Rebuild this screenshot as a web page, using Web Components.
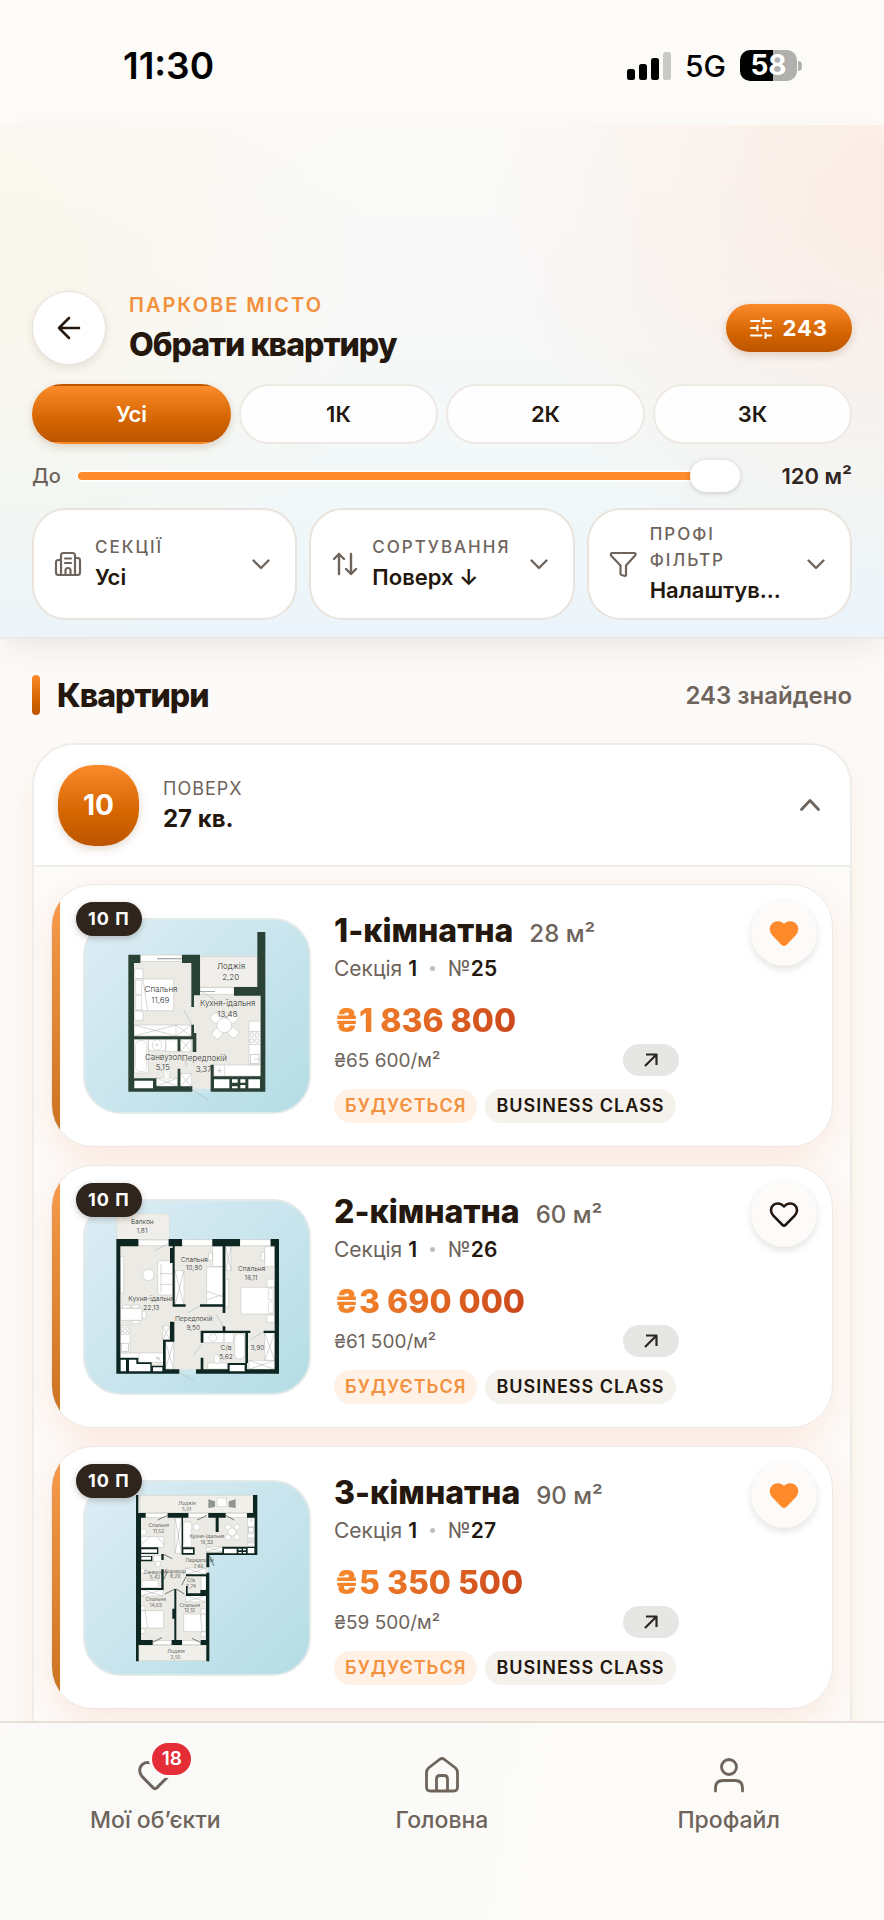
<!DOCTYPE html>
<html lang="uk">
<head>
<meta charset="utf-8">
<meta name="viewport" content="width=device-width, initial-scale=1">
<title>Обрати квартиру</title>
<style>
    :root {
        --ink: #23170e;
        --muted: #6e645c;
        --orange: #fd8b2b;
        --line: #eae3dc;
        --paper: #fcfaf8;
        --grad: linear-gradient(180deg, #fb8a2b 0%, #d46500 60%, #bd5500 100%);
    }
    body {
        margin: 0;
        background: var(--paper);
        color: var(--ink);
        font-family: Inter, "Liberation Sans", sans-serif;
    }
    .plan {
        display: block;
        width: 100%;
        height: 100%;
        font: 300 24px Inter, "Liberation Sans", sans-serif;
    }
    .plan.mid { font-size: 20px; }
    .plan.small { font-size: 15px; }
    .plan text { text-anchor: middle; fill: #2c332f; }
    .plan .floor { fill: #eceae5; }
    .plan .wall { fill: #2a4136; }
    .plan.dark .wall { fill: #0e2621; }
    .plan .item { fill: #fff; stroke: #bdbdbb; stroke-width: 1.5; }
    .plan .thin { fill: none; stroke: #a9acab; stroke-width: 1.5; }
    .plan .door { fill: none; stroke: #33413b; stroke-width: 2; }
</style>
</head>
<body>

<app-shell>
    <status-bar slot="top" time="11:30" network="5G" battery="58"></status-bar>

    <filter-header slot="top" eyebrow="Паркове місто" heading="Обрати квартиру" count="243">
        <room-tabs options="Усі,1К,2К,3К"></room-tabs>
        <area-slider max="120"></area-slider>
        <filter-row>
            <filter-select label="Секції" value="Усі" icon="building"></filter-select>
            <filter-select label="Сортування" value="Поверх ↓" icon="sort"></filter-select>
            <filter-select label="Профі фільтр" value="Налаштув..." icon="funnel"></filter-select>
        </filter-row>
    </filter-header>

    <section-title heading="Квартири">243 знайдено</section-title>

    <floor-group floor="10" count="27 кв.">
        <flat-card rooms="1-кімнатна" area="28 м²" section="1" number="25" price="1 836 800" rate="65 600" floor="10 П" liked>
            <svg slot="plan" class="plan" viewBox="134 151 672 576">
                <path class="floor" d="M270 262H470V262H660V660H270Z"/>
                <path fill="#f1efeb" stroke="#dccfc4" stroke-width="2" d="M479 261H651V352H479Z"/>
                <path fill="#cde7ec" d="M456 657H511V670H456Z"/>
                <path class="item" d="M300 256H425V275H300ZM479 354H581V374H479ZM283 298H308V326H283ZM283 424H308V452H283ZM283 328H400V423H283ZM286 332H304V374H286ZM286 378H304V420H286ZM282 466H453V499H282ZM407 466V499M420 508H453V546H420ZM420 612H454V652H420ZM324 510H376V543H324ZM376 510H411V545H376ZM282 510H324V610H282ZM348 625H411V650H348ZM626 455H661V585H626ZM521 586H661V619H521ZM553 586V619"/>
                <rect class="item" x="285" y="512" width="34" height="94" rx="16"/>
                <ellipse class="item" cx="350" cy="526" rx="14" ry="16"/>
                <circle class="thin" cx="350" cy="526" r="3"/>
                <path class="item" d="M370 585H388V630H370Z" opacity=".6"/>
                <path class="thin" d="M282 466L407 499M282 499L407 466M407 466L453 499M407 499L453 466M420 508L453 546M420 546L453 508M420 612L454 652M420 652L454 612M348 625L411 650M348 650L411 625M308 328L322 423M430 420L455 465M479 363L524 390M456 660L504 692M428 560L440 590M626 524H661M626 486H661M530 603H546M538 595V611"/>
                <path fill="#8b9390" d="M350 266H425V269H350ZM479 364H524V366H479Z"/>
                <g class="thin"><circle cx="634" cy="496" r="6"/><circle cx="650" cy="496" r="6"/><circle cx="634" cy="513" r="6"/><circle cx="650" cy="513" r="6"/><rect x="630" y="554" width="26" height="28"/><path d="M641 568H660"/></g>
                <g class="item"><rect x="513" y="432" width="26" height="26" rx="4" transform="rotate(-50 526 445)"/><rect x="565" y="432" width="26" height="26" rx="4" transform="rotate(50 578 445)"/><rect x="518" y="479" width="26" height="26" rx="4" transform="rotate(40 531 492)"/><rect x="566" y="476" width="26" height="26" rx="4" transform="rotate(-50 579 489)"/><circle cx="552" cy="467" r="22"/></g>
                <path class="wall" d="M264 255H300V280H281V500H453V465H461V490H468V547H457V509H420V545H412V509H281V626H348V650H412V597H420V650H456V666H264ZM425 255H479V377H461V412H453V280H425ZM651 187H675V666H511V585H520V620H661V378H581V352H651Z"/>
                <path fill="#fff" d="M282 633H338V656H282ZM521 629H567V656H521ZM575 629H592V639H575ZM575 650H592V656H575ZM600 629H615V639H600ZM600 646H615V656H600ZM624 629H659V656H624Z"/>
                <text x="572" y="299">Лоджія</text><text x="571" y="332">2,20</text>
                <text x="362" y="368">Спальня</text><text x="360" y="401">11,69</text>
                <text x="562" y="410">Кухня-їдальня</text><text x="561" y="442">13,48</text>
                <text x="369" y="570">Санвузол</text><text x="367" y="602">5,15</text>
                <text x="492" y="575">Передпокій</text><text x="490" y="607">3,37</text>
            </svg>
        </flat-card>

        <flat-card rooms="2-кімнатна" area="60 м²" section="1" number="26" price="3 690 000" rate="61 500" floor="10 П">
            <svg slot="plan" class="plan mid dark" viewBox="134 124 672 576">
                <path class="floor" d="M236 250H708V635H236Z"/>
                <path fill="#efeeea" stroke="#d8dcd8" stroke-width="2" d="M229 162H387V240H229Z"/>
                <path fill="#cde7ec" d="M417 629H467V645H417Z"/>
                <path class="item" d="M294 241H385V258H294ZM425 240H516V258H425ZM599 240H691V258H599ZM240 290H250V400H240ZM517 260H548V320H517ZM505 280H517V302H505ZM499 322H548V435H499ZM404 333H431V436H404ZM556 261H572V332H556ZM673 261H703V320H673ZM662 278H673V302H662ZM680 358H703V382H680ZM602 383H702V463H602ZM680 466H703V488H680ZM556 360H565V442H556ZM240 446H305V482H240ZM247 436H269V446H247ZM275 436H296V446H275ZM275 482H297V492H275ZM305 454H317V476H305ZM240 498H269V580H240ZM240 580H371V608H240ZM296 580V608M367 499H388V540H367ZM375 546H400V628H375ZM489 520H551V549H489ZM551 520H579V549H551ZM502 610H560V628H502ZM673 520H703V602H673ZM626 602H703V629H626Z"/>
                <path class="item" d="M362 303H396V406H362C352 406 352 398 352 390V318C352 308 356 303 362 303Z"/>
                <path class="thin" d="M362 312V398M360 342H396M360 374H396M499 394L548 412M500 420L548 404M404 333L431 436M404 436L431 333M556 261L572 332M556 332L572 261M375 546L400 628M375 628L400 546M367 499L388 540M367 540L388 499M673 520L703 602M673 602L703 520M626 602L703 629M626 629L703 602M345 272L383 252M442 460L478 438M528 465L549 500M634 538L670 516M460 588L482 555M420 640L460 665M347 596H359M353 590V602M346 590L360 602"/>
                <rect class="item" x="583" y="522" width="30" height="76" rx="14"/>
                <rect class="item" x="684" y="386" width="15" height="34" rx="5"/><rect class="item" x="684" y="426" width="15" height="34" rx="5"/>
                <circle class="item" cx="324" cy="346" r="17"/>
                <ellipse class="item" cx="518" cy="534" rx="12" ry="11"/><ellipse class="item" cx="530" cy="598" rx="9" ry="13"/>
                <g class="thin"><circle cx="247" cy="507" r="5"/><circle cx="261" cy="507" r="5"/><circle cx="247" cy="520" r="5"/><circle cx="261" cy="520" r="5"/><rect x="243" y="552" width="22" height="24"/></g>
                <path class="wall" d="M228 238H294V260H240V594H294V608H334V618H368V540H389V486H402V546H376V629H417V642H228ZM385 238H425V260H403V434H436V441H397V310H389V265H397V260H385ZM516 238H599V260H555V460H547V441H479V434H547V260H516ZM691 238H716V642H467V629H481V594H489V629H562V610H620V629H703V520H670V513H703V260H691ZM547 500H555V513H630V520H623V610H615V520H489V549H481V513H547Z"/>
                <path fill="#fff" d="M241 600H257V635H241ZM266 600H288V613H330V635H266ZM338 623H366V635H338ZM568 616H613V635H568Z"/>
                <text x="306" y="194">Балкон</text><text x="305" y="220">1,81</text>
                <text x="462" y="306">Спальня</text><text x="461" y="332">10,90</text>
                <text x="634" y="334">Спальня</text><text x="632" y="360">16,11</text>
                <text x="333" y="425">Кухня-їдальня</text><text x="333" y="452">22,13</text>
                <text x="460" y="483">Передпокій</text><text x="459" y="510">9,50</text>
                <text x="557" y="570">С/в</text><text x="557" y="597">5,62</text><text x="651" y="570">3,90</text>
            </svg>
        </flat-card>

        <flat-card rooms="3-кімнатна" area="90 м²" section="1" number="27" price="5 350 500" rate="59 500" floor="10 П" liked>
            <svg slot="plan" class="plan small dark" viewBox="134 128 672 576">
                <path class="floor" d="M292 170H648V345H503V664H292Z"/>
                <path fill="#f1efea" stroke="#cfd3cf" stroke-width="2" d="M299 168H638V220H299ZM295 618H498V664H295Z"/>
                <path class="item" d="M316 222H382V234H316ZM444 222H504V234H444ZM556 222H620V234H556ZM530 176H558V202H530ZM303 292H370V324H303ZM404 236H424V342H404ZM430 248H454V322H430ZM622 236H642V320H622ZM498 322H546V338H498ZM436 386H497V406H436ZM302 450H368V470H302ZM436 468H497V488H436ZM302 514H370V566H302ZM302 500H314V514H302ZM302 568H314V582H302ZM430 524H496V577H430ZM482 508H496V524H482ZM482 577H496V592H482ZM340 348H366V366H340ZM482 412H497V452H482ZM337 604H394V616H337ZM425 604H481V616H425Z"/>
                <path class="item" d="M305 424H352Q358 434 352 444H305ZM345 366H360V380Q352 388 345 380Z"/>
                <path class="thin" d="M404 236L424 342M404 342L424 236M436 386L497 406M436 406L497 386M302 450L368 470M302 470L368 450M436 468L497 488M436 488L497 468M498 322L546 338M498 338L546 322M314 514L322 566M480 524L486 577M622 262H642M622 282H642M303 315L330 292M370 315L350 292"/>
                <circle class="item" cx="310" cy="278" r="9"/><circle class="item" cx="469" cy="263" r="10"/><circle class="item" cx="309" cy="395" r="8"/>
                <g class="item"><rect x="556" y="256" width="15" height="15" rx="3" transform="rotate(40 563 263)"/><rect x="582" y="256" width="15" height="15" rx="3" transform="rotate(-40 589 263)"/><rect x="556" y="286" width="15" height="15" rx="3" transform="rotate(40 563 293)"/><rect x="582" y="286" width="15" height="15" rx="3" transform="rotate(-40 589 293)"/><circle cx="575" cy="278" r="12"/></g>
                <path fill="#8f9692" d="M504 180L524 186V203L504 206ZM565 186L586 180V206L565 203Z"/>
                <g class="thin"><circle cx="628" cy="298" r="4"/><circle cx="637" cy="298" r="4"/><circle cx="628" cy="308" r="4"/><circle cx="637" cy="308" r="4"/><circle cx="633" cy="244" r="3"/><rect x="625" y="264" width="14" height="14"/></g>
                <path class="door" d="M352 242L381 228M470 242L500 228M556 228L582 242M370 345L396 358M508 350L521 380M370 420L382 396M374 464L404 449M408 449L432 464M424 438L437 412M338 608L365 595M455 597L481 610"/>
                <path class="wall" d="M287 167H294V221H316V235H302V324H354V344H302V350H336V366H302V446H363V390H370V452H302V602H337V617H295V666H287ZM382 221H444V235H428V324H463V346H424V235H382ZM504 221H556V235H535V278H526V235H504ZM638 167H651V347H507V384H498V340H546V322H643V235H620V221H638ZM363 344H370V362H363ZM498 400H507V666H498V617H481V602H497V470H437V440H442V462H480V452H497V411H437V405H498ZM402 449H408V602H425V617H394V602H402V538H396V508H402Z"/>
                <path fill="#fff" d="M303 330H350V340H303ZM303 352H332V361H303ZM429 330H458V341H429ZM551 328H589V342H551ZM622 326H642V342H622ZM594 328H604V333H594ZM608 328H617V333H608ZM594 338H604V342H594ZM608 338H617V342H608Z"/>
                <text x="440" y="197">Лоджія</text><text x="439" y="215">5,01</text>
                <text x="355" y="264">Спальня</text><text x="355" y="282">11,52</text>
                <text x="500" y="297">Кухня-їдальня</text><text x="499" y="314">16,33</text>
                <text x="478" y="368">Передпокій</text><text x="474" y="386">7,46</text>
                <text x="344" y="403">Санвузол</text><text x="344" y="420">5,42</text>
                <text x="405" y="400">Коридор</text><text x="405" y="417">8,26</text>
                <text x="452" y="427">С/в</text><text x="452" y="445">2,74</text>
                <text x="346" y="486">Спальня</text><text x="346" y="504">14,63</text>
                <text x="448" y="502">Спальня</text><text x="448" y="519">12,12</text>
                <text x="407" y="641">Лоджія</text><text x="406" y="659">2,55</text>
            </svg>
        </flat-card>
    </floor-group>

    <tab-bar slot="bottom">
        <tab-link icon="heart" badge="18">Мої об’єкти</tab-link>
        <tab-link icon="home">Головна</tab-link>
        <tab-link icon="user">Профайл</tab-link>
    </tab-bar>
</app-shell>

<script>
const ICONS = {
    back: `<svg width="26" height="26" viewBox="0 0 26 26" fill="none" stroke="currentColor" stroke-width="2.6" stroke-linecap="round" stroke-linejoin="round"><path d="M23 13H3M13 3L3 13L13 23"/></svg>`,
    sliders: `<svg width="22" height="22" viewBox="0 0 22 22" fill="none" stroke="currentColor" stroke-width="2" stroke-linecap="round"><path d="M1 4H9.5M13.5 4H21M13.5 1.5V6.5M1 11H7.5M7.5 8.5V13.5M11.5 11H21M1 18.5H11.5M15.5 18.5H21M15.5 16V21"/></svg>`,
    building: `<svg width="28" height="28" viewBox="0 0 28 28" fill="none" stroke="currentColor" stroke-width="2.2" stroke-linecap="round" stroke-linejoin="round"><path d="M7 25V5.5Q7 3 9.5 3H18.5Q21 3 21 5.5V25M7 10H4.5Q2 10 2 12.5V22.5Q2 25 4.5 25H23.5Q26 25 26 22.5V10.5Q26 8 23.5 8H21M11 8.5H17M11 13H17M11.5 25V20.5Q11.5 18 14 18Q16.5 18 16.5 20.5V25"/></svg>`,
    sort: `<svg width="28" height="28" viewBox="0 0 28 28" fill="none" stroke="currentColor" stroke-width="2.4" stroke-linecap="round" stroke-linejoin="round"><path d="M8 24V4M3 9L8 4L13 9M20 4V24M15 19L20 24L25 19"/></svg>`,
    funnel: `<svg width="28" height="28" viewBox="0 0 28 28" fill="none" stroke="currentColor" stroke-width="2.2" stroke-linejoin="round"><path d="M3 3H25Q27 3 26.5 5L17 15.5V25Q17 26 16 26L12.5 25Q11.5 24.5 11.5 23.5V15.5L2 5.5Q1.5 3.5 3 3Z"/></svg>`,
    down: `<svg width="20" height="20" viewBox="0 0 20 20" fill="none" stroke="currentColor" stroke-width="2.4" stroke-linecap="round" stroke-linejoin="round"><path d="M2.5 6.5L10 14L17.5 6.5"/></svg>`,
    up: `<svg width="20" height="20" viewBox="0 0 20 20" fill="none" stroke="currentColor" stroke-width="2.8" stroke-linecap="round" stroke-linejoin="round"><path d="M1.5 14.5L10 5.5L18.5 14.5"/></svg>`,
    open: `<svg width="16" height="16" viewBox="0 0 16 16" fill="none" stroke="currentColor" stroke-width="2.2" stroke-linejoin="round"><path d="M3 2.5H13.5V13M13.5 2.5L2 14"/></svg>`,
    like: `<svg width="34" height="34" viewBox="0 0 24 24" stroke="currentColor" stroke-width="1.8" stroke-linecap="round" stroke-linejoin="round"><path d="M12 20.2C11.5 20.2 11.2 20 10.8 19.6L4.3 13C2.2 10.8 2.4 7.4 4.5 5.6C6.6 3.9 9.8 4.2 12 6.7C14.2 4.2 17.4 3.9 19.5 5.6C21.6 7.4 21.8 10.8 19.7 13L13.2 19.6C12.8 20 12.5 20.2 12 20.2Z"/></svg>`,
    home: `<svg width="40" height="40" viewBox="0 0 40 40" fill="none" stroke="currentColor" stroke-width="2.8" stroke-linejoin="round"><path d="M4.5 17.5Q4.5 15 6.5 13L17.5 4.5Q20 2.5 22.5 4.5L33.5 13Q35.5 15 35.5 17.5V32Q35.5 36 31.5 36H8.5Q4.5 36 4.5 32ZM14.5 36V24Q14.5 20.5 18 20.5H22Q25.5 20.5 25.5 24V36"/></svg>`,
    user: `<svg width="40" height="40" viewBox="0 0 40 40" fill="none" stroke="currentColor" stroke-width="2.8" stroke-linecap="round"><circle cx="20" cy="12" r="7.5"/><path d="M6.5 36V33Q6.5 25.5 14 25.5H26Q33.5 25.5 33.5 33V36"/></svg>`
};
ICONS.heart = ICONS.like.replace(`width="34" height="34"`, `width="40" height="40" fill="none"`);

const RESET = `
    * { box-sizing: border-box; margin: 0; }
    button, select, input { font: inherit; color: inherit; border: 0; padding: 0; background: none; }
    svg { display: block; flex: none; }
`;

class BaseElement extends HTMLElement {
    connectedCallback(){
        if (this.shadowRoot) return;
        this.attachShadow({mode: "open"}).innerHTML = `<style>${RESET}</style>${this.render()}`;
    }

    attr(name){
        return this.getAttribute(name) || "";
    }
}

customElements.define("app-shell", class extends BaseElement {
    render(){
        return `
            <style>
            :host {
                display: flex;
                flex-direction: column;
                height: 100vh;
            }
            header {
                position: relative;
                z-index: 1;
            }
            main {
                flex: 1;
                min-height: 0;
                overflow-y: auto;
                scrollbar-width: none;
                padding: 36px 32px 0;
            }
            </style>
            <header><slot name="top"></slot></header>
            <main><slot></slot></main>
            <slot name="bottom"></slot>`;
    }
});

customElements.define("status-bar", class extends BaseElement {
    render(){
        return `
            <style>
            :host {
                display: flex;
                align-items: center;
                justify-content: space-between;
                height: 125px;
                padding: 6px 82px 0 123px;
                box-sizing: border-box;
                background: #fcfbf8;
                color: #000;
            }
            .time {
                font-size: 37px;
                font-weight: 600;
            }
            .right {
                display: flex;
                align-items: center;
                gap: 14px;
                font-size: 30px;
                font-weight: 500;
            }
            .battery {
                display: flex;
                align-items: center;
                gap: 1px;
            }
            .cell {
                width: 57px;
                height: 31px;
                border-radius: 10px;
                background: linear-gradient(90deg, #000 58%, #b0b0ae 58%);
                color: #fff;
                font-size: 28px;
                font-weight: 700;
                line-height: 31px;
                text-align: center;
            }
            .nub {
                width: 4px;
                height: 10px;
                border-radius: 0 4px 4px 0;
                background: #b0b0ae;
            }
            </style>
            <span class="time">${this.attr("time")}</span>
            <div class="right">
                <svg width="44" height="28" viewBox="0 0 44 28">
                    <rect y="17" width="8" height="11" rx="2.5"/>
                    <rect x="12" y="12" width="8" height="16" rx="2.5"/>
                    <rect x="24" y="6" width="8" height="22" rx="2.5"/>
                    <rect x="36" width="8" height="28" rx="2.5" fill="#c9c9c7"/>
                </svg>
                <span>${this.attr("network")}</span>
                <div class="battery"><div class="cell">${this.attr("battery")}</div><div class="nub"></div></div>
            </div>`;
    }
});

customElements.define("filter-header", class extends BaseElement {
    render(){
        return `
            <style>
            :host {
                display: flex;
                flex-direction: column;
                gap: 16px;
                padding: 166px 32px 17px;
                border-bottom: 2px solid #ebeae6;
                background:
                    radial-gradient(circle at 100% 14%, rgba(251, 229, 217, .65), rgba(251, 229, 217, 0) 40%),
                    radial-gradient(circle at 0% 30%, rgba(250, 245, 230, .7), rgba(250, 245, 230, 0) 40%),
                    linear-gradient(180deg, #fbfaf8 0%, #f8f8f8 35%, #f1f8f8 72%, #ebf4fb 100%);
                box-shadow: 0 12px 28px -6px rgba(90, 90, 90, .12);
            }
            .bar {
                display: flex;
                align-items: center;
                margin-bottom: 3px;
            }
            .back {
                display: grid;
                place-items: center;
                width: 74px;
                height: 74px;
                border: 1px solid var(--line);
                border-radius: 50%;
                background: #fff;
                box-shadow: 0 3px 8px rgba(60, 40, 20, .1);
            }
            .titles {
                flex: 1;
                margin-left: 23px;
            }
            .eyebrow {
                margin-bottom: 6px;
                color: #f3903c;
                font-size: 20px;
                font-weight: 600;
                line-height: 28px;
                letter-spacing: 2px;
                text-transform: uppercase;
            }
            h1 {
                font-size: 32px;
                font-weight: 800;
                line-height: 40px;
                letter-spacing: -1px;
            }
            .count {
                display: flex;
                align-items: center;
                gap: 10px;
                height: 48px;
                padding: 0 24px;
                border-radius: 24px;
                background: var(--grad);
                box-shadow: 0 3px 8px rgba(120, 60, 10, .2);
                color: #fff;
                font-size: 22px;
                font-weight: 700;
                letter-spacing: 1px;
            }
            </style>
            <div class="bar">
                <button class="back" aria-label="Назад">${ICONS.back}</button>
                <div class="titles">
                    <p class="eyebrow">${this.attr("eyebrow")}</p>
                    <h1>${this.attr("heading")}</h1>
                </div>
                <button class="count">${ICONS.sliders}${this.attr("count")}</button>
            </div>
            <slot></slot>`;
    }
});

customElements.define("room-tabs", class extends BaseElement {
    render(){
        const tabs = this.attr("options").split(",")
            .map((name, i) => `<button aria-pressed="${i === 0}">${name}</button>`).join("");
        return `
            <style>
            :host {
                display: grid;
                grid-template-columns: repeat(4, 1fr);
                gap: 8px;
            }
            button {
                height: 60px;
                border: 2px solid #efe9e4;
                border-radius: 30px;
                background: #fefefe;
                font-size: 22px;
                font-weight: 600;
            }
            button[aria-pressed="true"] {
                border-color: transparent;
                background: var(--grad);
                box-shadow: 0 3px 8px rgba(120, 60, 10, .2);
                color: #fff;
            }
            </style>
            ${tabs}`;
    }
});

customElements.define("area-slider", class extends BaseElement {
    render(){
        const max = this.attr("max");
        return `
            <style>
            :host {
                display: flex;
                align-items: center;
                gap: 17px;
                height: 32px;
                font-size: 22px;
            }
            label {
                color: var(--muted);
                font-size: 20px;
                font-weight: 500;
            }
            input {
                flex: 1;
                min-width: 0;
                height: 32px;
                appearance: none;
            }
            input::-webkit-slider-runnable-track {
                height: 8px;
                border-radius: 4px;
                background: var(--orange);
                box-shadow: 0 0 0 2px rgba(255, 255, 255, .8);
            }
            input::-webkit-slider-thumb {
                appearance: none;
                width: 50px;
                height: 32px;
                margin-top: -12px;
                border-radius: 16px;
                background: #fff;
                box-shadow: 0 1px 5px rgba(60, 50, 40, .25);
            }
            output {
                min-width: 95px;
                color: #30261f;
                font-weight: 600;
                text-align: right;
            }
            </style>
            <label for="area">До</label>
            <input id="area" type="range" min="0" max="${max}" value="${max}">
            <output for="area">${max} м²</output>`;
    }
});

customElements.define("filter-row", class extends BaseElement {
    render(){
        return `
            <style>
            :host {
                display: grid;
                grid-template-columns: repeat(3, minmax(0, 1fr));
                gap: 12px;
            }
            </style>
            <slot></slot>`;
    }
});

customElements.define("filter-select", class extends BaseElement {
    render(){
        return `
            <style>
            :host {
                display: flex;
                align-items: center;
                box-sizing: border-box;
                height: 112px;
                padding: 0 24px 0 20px;
                border: 2px solid var(--line);
                border-radius: 34px;
                background: #fff;
                color: var(--muted);
            }
            div {
                flex: 1;
                min-width: 0;
                margin: 0 12px 0 13px;
            }
            label {
                display: block;
                font-size: 17px;
                font-weight: 500;
                line-height: 26px;
                letter-spacing: 2px;
                text-transform: uppercase;
            }
            select {
                display: block;
                width: 100%;
                height: 34px;
                appearance: none;
                color: var(--ink);
                font-size: 22px;
                font-weight: 600;
            }
            </style>
            ${ICONS[this.attr("icon")]}
            <div>
                <label for="value">${this.attr("label")}</label>
                <select id="value"><option>${this.attr("value")}</option></select>
            </div>
            ${ICONS.down}`;
    }
});

customElements.define("section-title", class extends BaseElement {
    render(){
        return `
            <style>
            :host {
                display: flex;
                align-items: center;
                gap: 17px;
                margin-bottom: 28px;
                color: var(--muted);
                font-size: 24px;
                font-weight: 600;
            }
            i {
                width: 8px;
                height: 40px;
                border-radius: 4px;
                background: var(--grad);
            }
            h2 {
                flex: 1;
                color: var(--ink);
                font-size: 32px;
                font-weight: 800;
                letter-spacing: -1px;
            }
            </style>
            <i></i><h2>${this.attr("heading")}</h2><slot></slot>`;
    }
});

customElements.define("floor-group", class extends BaseElement {
    render(){
        return `
            <style>
            :host {
                display: block;
                overflow: hidden;
                border: 2px solid #f0ede9;
                border-radius: 42px;
                background: #fdfbfa;
                box-shadow: 0 16px 32px rgba(240, 140, 70, .1);
            }
            .head {
                display: flex;
                align-items: center;
                width: 100%;
                height: 122px;
                padding: 0 30px 0 24px;
                border-bottom: 2px solid #efedea;
                background: #fff;
                text-align: left;
            }
            .floor {
                display: grid;
                place-items: center;
                width: 81px;
                height: 81px;
                margin-right: 24px;
                border-radius: 36px;
                background: var(--grad);
                box-shadow: 0 3px 8px rgba(120, 60, 10, .2);
                color: #fff;
                font-size: 28px;
                font-weight: 700;
            }
            .text {
                display: flex;
                flex: 1;
                flex-direction: column;
            }
            .label {
                color: var(--muted);
                font-size: 18px;
                line-height: 28px;
                letter-spacing: 1px;
            }
            .count {
                font-size: 24px;
                font-weight: 700;
                line-height: 32px;
            }
            .up { color: var(--muted); }
            .list {
                display: grid;
                gap: 18px;
                padding: 17px 17px 72px;
            }
            </style>
            <button class="head" aria-expanded="true">
                <span class="floor">${this.attr("floor")}</span>
                <span class="text">
                    <span class="label">ПОВЕРХ</span>
                    <span class="count">${this.attr("count")}</span>
                </span>
                <span class="up">${ICONS.up}</span>
            </button>
            <div class="list"><slot></slot></div>`;
    }
});

customElements.define("flat-card", class extends BaseElement {
    render(){
        return `
            <style>
            :host {
                display: block;
                border-radius: 42px;
                box-shadow: 0 12px 36px rgba(240, 120, 50, .14);
            }
            article {
                display: flex;
                overflow: hidden;
                padding: 15px 15px 15px 31px;
                border: 1px solid #ece9e4;
                border-radius: 42px;
                background: linear-gradient(180deg, #fb9b50, #c9711f) left / 8px 100% no-repeat, #fff;
            }
            .thumb {
                position: relative;
                align-self: center;
                flex: none;
                width: 228px;
                height: 196px;
                border: 2px solid #e2e9e9;
                border-radius: 38px;
                background: linear-gradient(135deg, #deedf5, #b4dde5);
            }
            .floor {
                position: absolute;
                top: -18px;
                left: -9px;
                height: 34px;
                padding: 0 12px;
                border-radius: 17px;
                background: #30251d;
                box-shadow: 0 2px 6px rgba(40, 25, 10, .25);
                color: #fff;
                font-size: 18px;
                font-weight: 700;
                line-height: 34px;
                letter-spacing: 1px;
            }
            .info {
                flex: 1;
                min-width: 0;
                margin: 11px 72px 8px 23px;
            }
            .title {
                display: flex;
                align-items: baseline;
                gap: 16px;
                height: 44px;
                line-height: 40px;
                white-space: nowrap;
            }
            h3 {
                font-size: 32px;
                font-weight: 800;
            }
            .area {
                color: var(--muted);
                font-size: 24px;
                font-weight: 500;
            }
            .place {
                height: 28px;
                margin-bottom: 18px;
                color: var(--muted);
                font-size: 21px;
                line-height: 28px;
            }
            .place b {
                color: var(--ink);
                font-weight: 600;
            }
            .dot {
                display: inline-block;
                width: 5px;
                height: 5px;
                margin: 0 7px 5px;
                border-radius: 50%;
                background: #c2bdb7;
            }
            .price {
                width: fit-content;
                background: linear-gradient(120deg, #fb8d2c, #c9441b);
                background-clip: text;
                color: transparent;
                font-size: 32px;
                font-weight: 800;
                line-height: 40px;
            }
            .rate {
                display: flex;
                align-items: center;
                justify-content: space-between;
                height: 32px;
                margin: 3px 0 13px;
                color: var(--muted);
                font-size: 19px;
            }
            .open {
                display: grid;
                place-items: center;
                width: 56px;
                height: 32px;
                border-radius: 16px;
                background: #e6e6e5;
                color: #2b2622;
            }
            .chips {
                display: flex;
                gap: 8px;
                white-space: nowrap;
            }
            .chips span {
                padding: 0 11px;
                border-radius: 17px;
                background: #f5f1ec;
                font-size: 18px;
                font-weight: 600;
                line-height: 34px;
                letter-spacing: 1px;
            }
            .chips .build {
                background: #fff1e6;
                color: #f3913f;
            }
            .fav {
                display: grid;
                place-items: center;
                flex: none;
                width: 66px;
                height: 66px;
                border-radius: 50%;
                background: #fcfbfa;
                box-shadow: 0 3px 7px rgba(60, 40, 20, .14);
            }
            .fav svg { fill: none; }
            :host([liked]) .fav { color: var(--orange); }
            :host([liked]) .fav svg { fill: currentColor; }
            </style>
            <article>
                <div class="thumb">
                    <slot name="plan"></slot>
                    <span class="floor">${this.attr("floor")}</span>
                </div>
                <div class="info">
                    <div class="title"><h3>${this.attr("rooms")}</h3><span class="area">${this.attr("area")}</span></div>
                    <p class="place">Секція <b>${this.attr("section")}</b> <span class="dot"></span> №<b>${this.attr("number")}</b></p>
                    <p class="price">₴${this.attr("price")}</p>
                    <div class="rate">₴${this.attr("rate")}/м² <button class="open" aria-label="Відкрити">${ICONS.open}</button></div>
                    <div class="chips"><span class="build">БУДУЄТЬСЯ</span><span>BUSINESS CLASS</span></div>
                </div>
                <button class="fav" aria-label="В обране">${ICONS.like}</button>
            </article>`;
    }
});

customElements.define("tab-bar", class extends BaseElement {
    render(){
        return `
            <style>
            :host {
                display: block;
                position: relative;
                border-top: 2px solid #e5dfd7;
                background: linear-gradient(100deg, #fbfaf8, #f9f9f7 25%, #fcfbf8 60%);
            }
            nav {
                display: grid;
                grid-template-columns: repeat(3, 1fr);
                padding: 32px 12px 85px;
            }
            </style>
            <nav><slot></slot></nav>`;
    }
});

customElements.define("tab-link", class extends BaseElement {
    render(){
        const badge = this.attr("badge");
        return `
            <style>
            :host { display: block; }
            a {
                display: flex;
                flex-direction: column;
                align-items: center;
                gap: 10px;
                color: var(--muted);
                font-size: 23px;
                font-weight: 500;
                line-height: 30px;
                text-decoration: none;
            }
            .icon { position: relative; }
            .badge {
                position: absolute;
                top: -15px;
                left: 14px;
                min-width: 45px;
                padding: 0 4px;
                border: 3px solid #fbfaf8;
                border-radius: 20px;
                background: #e52d38;
                color: #fff;
                font-size: 19px;
                font-weight: 600;
                line-height: 32px;
                text-align: center;
            }
            </style>
            <a href="#${this.attr("icon")}">
                <span class="icon">${ICONS[this.attr("icon")]}${badge ? `<span class="badge">${badge}</span>` : ""}</span>
                <slot></slot>
            </a>`;
    }
});
</script>
</body>
</html>
